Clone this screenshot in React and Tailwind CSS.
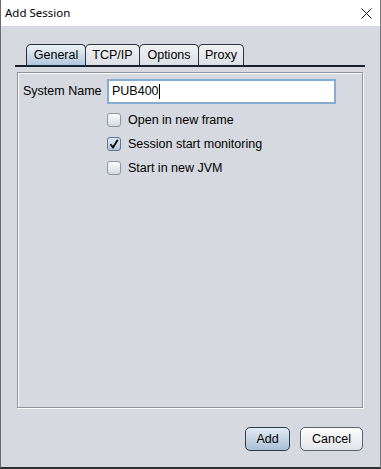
const tabs = [
  { label: "General", w: "w-[60px]", active: true },
  { label: "TCP/IP", w: "w-[55px]" },
  { label: "Options", w: "w-[60px]" },
  { label: "Proxy", w: "w-[46px]" },
];

const options = [
  { label: "Open in new frame", checked: false },
  { label: "Session start monitoring", checked: true },
  { label: "Start in new JVM", checked: false },
];

const CheckBox = ({ checked }) => (
  <span
    className={
      checked
        ? "w-[14px] h-[14px] rounded-[3px] border border-[#5f7892] bg-gradient-to-b from-[#dfe8f1] to-[#b3c8dc] flex items-center justify-center"
        : "w-[14px] h-[14px] rounded-[3px] border border-[#8c96a3] bg-gradient-to-b from-[#fbfbfc] to-[#d6dbe1] flex items-center justify-center"
    }
  >
    {checked && (
      <svg width="12" height="12" viewBox="0 0 12 12">
        <path d="M2.5 6.2 L5 9.5 L9.8 1.8" fill="none" stroke="#000" strokeWidth="1.8" />
      </svg>
    )}
  </span>
);

export default function App() {
  return (
    <div className="w-[381px] h-[469px] flex flex-col bg-[#d6d9df] border-l border-r border-b-2 border-l-[#6a6a6a] border-r-[#7a7a7a] border-b-[#2e2e2e] font-['Liberation_Sans',Arial,sans-serif] text-[12px] text-black">
      {/* Title bar */}
      <div className="h-[26px] bg-white flex items-center justify-between pl-[4px] pr-[8px] shrink-0">
        <span className="font-['Noto_Sans',sans-serif] text-[11.5px] text-black">Add Session</span>
        <svg width="11" height="11" viewBox="0 0 11 11">
          <path d="M0.5 0.5 L10.5 10.5 M10.5 0.5 L0.5 10.5" stroke="#111" strokeWidth="1" />
        </svg>
      </div>

      {/* Body */}
      <div className="flex-1 flex flex-col pl-[14px] pr-[15px] pt-[18px]">
        <div className="flex pl-[11px] h-[21px]">
          {tabs.map((t) => (
            <div
              key={t.label}
              className={
                t.active
                  ? `${t.w} -mr-[1px] h-full rounded-t-[5px] border border-b-0 border-[#25313f] bg-gradient-to-b from-[#eef2f6] to-[#b2c8dc] flex items-center justify-center text-[12.5px]`
                  : `${t.w} -mr-[1px] h-full rounded-t-[5px] border border-b-0 border-[#2c3440] bg-gradient-to-b from-[#f1f2f4] to-[#dcdfe4] flex items-center justify-center text-[12.5px]`
              }
            >
              {t.label}
            </div>
          ))}
        </div>
        <div className="h-[2px] bg-[#17212f]" />

        {/* Panel */}
        <div className="mt-[5px] mx-[2px] h-[336px] border border-[#8e939b] shadow-[inset_1px_1px_0_#ffffff,1px_1px_0_#ffffff] pt-[6px] pl-[5px]">
          <div className="flex items-center">
            <span className="w-[84px] text-[12.5px]">System Name</span>
            <div className="w-[229px] h-[25px] border-2 border-[#86acd3] bg-white flex items-center pl-[3px]">
              <span className="text-[12.5px]">PUB400</span>
              <span className="w-[1px] h-[15px] bg-black" />
            </div>
          </div>
          <div className="flex flex-col ml-[84px] mt-[4px]">
            {options.map((o) => (
              <div key={o.label} className="h-[24px] flex items-center gap-[7px]">
                <CheckBox checked={o.checked} />
                <span className="text-[12.5px]">{o.label}</span>
              </div>
            ))}
          </div>
        </div>

        {/* Buttons */}
        <div className="flex justify-end gap-[10px] mt-[19px] pr-[2px]">
          <button className="w-[45px] h-[24px] rounded-[5px] border border-[#2f3c4c] bg-gradient-to-b from-[#e3ebf3] to-[#a9c0d6] text-[12.5px]">
            Add
          </button>
          <button className="w-[63px] h-[24px] rounded-[5px] border border-[#5c6470] bg-gradient-to-b from-[#fdfdfd] to-[#e1e4e8] text-[12.5px]">
            Cancel
          </button>
        </div>
      </div>
    </div>
  );
}
